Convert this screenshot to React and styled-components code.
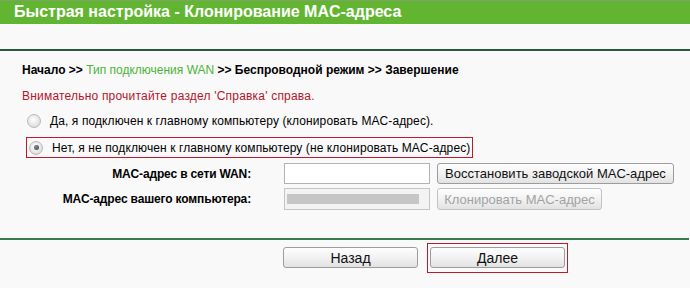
import React from "react";
import styled, { createGlobalStyle } from "styled-components";

const Global = createGlobalStyle`
  html, body { margin: 0; padding: 0; background: #f9f9f9; }
  body { font-family: "Liberation Sans", Arial, sans-serif; font-size: 12px; color: #000; }
`;

const Page = styled.div`
  width: 690px;
  height: 288px;
  overflow: hidden;
  background: #f9f9f9;
`;

const Header = styled.div`
  height: 23px;
  border-top: 1px solid #7fa267;
  background: #62b531;
  color: #fff;
  font-weight: bold;
  font-size: 16px;
  line-height: 22px;
  padding-left: 14px;
  white-space: nowrap;
`;

const SubHeader = styled.div`
  height: 25px;
  border-bottom: 2px solid #2a5a3c;
`;

const Content = styled.div`
  display: flex;
  flex-direction: column;
  padding-top: 9px;
`;

const TextRow = styled.div`
  height: 20px;
  line-height: 20px;
  padding-left: 22px;
  margin-top: ${(p) => p.$mt || 0}px;
  white-space: nowrap;
  color: ${(p) => p.$color || "#000"};
  letter-spacing: ${(p) => p.$ls || 0}px;
`;

const Bold = styled.b`
  font-weight: bold;
`;

const GreenLink = styled.span`
  color: #4cb43a;
`;

const RadioRow = styled.div`
  display: flex;
  align-items: center;
  box-sizing: border-box;
  height: ${(p) => (p.$boxed ? 21 : 20)}px;
  width: ${(p) => (p.$boxed ? "447px" : "auto")};
  margin-left: 26px;
  margin-top: ${(p) => p.$mt || 0}px;
  padding-left: ${(p) => (p.$boxed ? 2 : 1)}px;
  border: ${(p) => (p.$boxed ? "1px solid #c0182c" : "none")};
  white-space: nowrap;
  letter-spacing: 0.1px;
`;

const Radio = styled.span`
  position: relative;
  width: 12px;
  height: 12px;
  border-radius: 50%;
  border: 1px solid #b9b9b9;
  background: radial-gradient(circle at 45% 40%, #ffffff 0%, #e6e6e6 55%, #cfcfcf 100%);
  margin-right: 9px;
  flex: none;
  &::after {
    content: "";
    display: ${(p) => (p.$checked ? "block" : "none")};
    position: absolute;
    left: 3.5px;
    top: 3.5px;
    width: 5px;
    height: 5px;
    border-radius: 50%;
    background: radial-gradient(circle at 40% 40%, #8a8a8a, #3f3f3f);
  }
`;

const FormRow = styled.div`
  display: flex;
  align-items: center;
  height: ${(p) => p.$h}px;
  margin-top: ${(p) => p.$mt}px;
`;

const Label = styled.div`
  width: 251px;
  text-align: right;
  font-weight: bold;
  margin-right: 33px;
  white-space: nowrap;
  letter-spacing: -0.15px;
`;

const Field = styled.div`
  box-sizing: border-box;
  width: 146px;
  height: 100%;
  border: 1px solid ${(p) => (p.$disabled ? "#c4c4c4" : "#b3b3b3")};
  background: ${(p) => (p.$disabled ? "#f3f3f3" : "#fff")};
  margin-right: 7px;
  display: flex;
  align-items: center;
  padding-left: 2px;
`;

const Masked = styled.span`
  width: 132px;
  height: 10px;
  background: #c6c6c6;
`;

const Button = styled.button`
  box-sizing: border-box;
  height: ${(p) => p.$h || 21}px;
  width: ${(p) => (p.$w ? p.$w + "px" : "auto")};
  padding: 0 ${(p) => (p.$w ? 0 : 7)}px;
  border: 1px solid ${(p) => (p.disabled ? "#c2c2c2" : "#9c9c9c")};
  border-radius: 3px;
  background: linear-gradient(#fefefe, #f2f2f2 50%, #e2e2e2);
  font-family: "Liberation Sans", Arial, sans-serif;
  font-size: ${(p) => p.$fs || 13}px;
  color: ${(p) => (p.disabled ? "#a2a2a2" : "#111")};
  white-space: nowrap;
  margin-top: ${(p) => p.$mt || 0}px;
  flex: none;
`;

const Divider = styled.div`
  margin-top: 28px;
  height: 0;
  border-top: 2px solid #3b7b50;
  width: 689px;
`;

const Footer = styled.div`
  display: flex;
  align-items: flex-start;
  padding-left: 283px;
  margin-top: 3px;
`;

const Highlight = styled.div`
  margin-left: 9px;
  border: 1px solid #c0182c;
  padding: 3px 2px 4px 2px;
  display: flex;
`;

export default function App() {
  return (
    <Page>
      <Global />
      <Header>Быстрая настройка - Клонирование MAC-адреса</Header>
      <SubHeader />
      <Content>
        <TextRow>
          <Bold>Начало &gt;&gt; </Bold>
          <GreenLink>Тип подключения WAN</GreenLink>
          <Bold> &gt;&gt; Беспроводной режим &gt;&gt; Завершение</Bold>
        </TextRow>
        <TextRow $mt={6} $color="#b5152b" $ls={0.2}>
          Внимательно прочитайте раздел 'Справка' справа.
        </TextRow>
        <RadioRow $mt={5}>
          <Radio />
          Да, я подключен к главному компьютеру (клонировать MAC-адрес).
        </RadioRow>
        <RadioRow $boxed $mt={6}>
          <Radio $checked />
          Нет, я не подключен к главному компьютеру (не клонировать MAC-адрес)
        </RadioRow>
        <FormRow $h={21} $mt={5}>
          <Label>MAC-адрес в сети WAN:</Label>
          <Field />
          <Button $w={237}>Восстановить заводской MAC-адрес</Button>
        </FormRow>
        <FormRow $h={22} $mt={4}>
          <Label>MAC-адрес вашего компьютера:</Label>
          <Field $disabled>
            <Masked />
          </Field>
          <Button $w={165} $h={22} disabled>
            Клонировать MAC-адрес
          </Button>
        </FormRow>
        <Divider />
        <Footer>
          <Button $w={135} $fs={14} $mt={4}>Назад</Button>
          <Highlight>
            <Button $w={135} $fs={14}>Далее</Button>
          </Highlight>
        </Footer>
      </Content>
    </Page>
  );
}
